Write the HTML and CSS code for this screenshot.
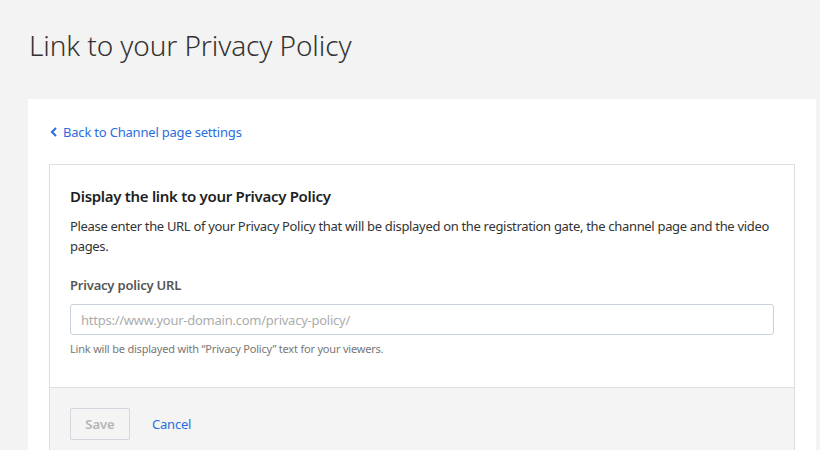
FILE: index.html
```html
<!DOCTYPE html>
<html>
<head>
<meta charset="utf-8">
<link rel="stylesheet" href="styles.css">
</head>
<body>
<div class="page">
  <h1 class="title">Link to your Privacy Policy</h1>
  <div class="panel">
    <a class="back" href="#"><svg class="chev" width="8" height="10" viewBox="0 0 8 10"><path d="M6 1 L2 5 L6 9" fill="none" stroke="currentColor" stroke-width="2"/></svg>Back to Channel page settings</a>
    <div class="card">
      <div class="card-body">
        <h2 class="card-title">Display the link to your Privacy Policy</h2>
        <p class="desc">Please enter the URL of your Privacy Policy that will be displayed on the registration gate, the channel page and the video pages.</p>
        <label class="label" for="url">Privacy policy URL</label>
        <input id="url" class="input" type="text" placeholder="https://www.your-domain.com/privacy-policy/">
        <p class="help">Link will be displayed with “Privacy Policy” text for your viewers.</p>
      </div>
      <div class="card-footer">
        <button class="btn-save" disabled>Save</button>
        <a class="cancel" href="#">Cancel</a>
      </div>
    </div>
  </div>
</div>
</body>
</html>
```

FILE: styles.css
```css
* { box-sizing: border-box; }
html, body { margin: 0; padding: 0; }
body {
  background: #f3f3f3;
  font-family: "Noto Sans", "Open Sans", sans-serif;
  color: #222;
  overflow: hidden;
}
.page { padding: 0 4px 0 28px; }
.title {
  margin: 0;
  padding: 27px 0 0 1px;
  height: 99px;
  font-size: 28px;
  font-weight: 300;
  color: #333;
  line-height: 36px;
  letter-spacing: -0.1px;
}
.panel {
  background: #fff;
  padding: 24px 21px 0 21px;
  height: 360px;
}
.back {
  display: flex;
  align-items: center;
  gap: 5px;
  color: #2a6de0;
  text-decoration: none;
  font-size: 13px;
  line-height: 18px;
  height: 18px;
  margin-left: 1px;
  letter-spacing: -0.2px;
}
.chev { display: block; }
.card {
  margin-top: 23px;
  border: 1px solid #dedede;
  border-bottom: none;
  height: 300px;
  display: flex;
  flex-direction: column;
}
.card-body { padding: 20px 20px 30px 20px; }
.card-title {
  margin: 0;
  font-size: 15px;
  font-weight: 600;
  line-height: 22px;
  color: #1e1e1e;
  letter-spacing: -0.3px;
}
.desc {
  margin: 9px 0 0 0;
  font-size: 13px;
  line-height: 20px;
  color: #333;
  letter-spacing: -0.32px;
}
.label {
  display: block;
  margin-top: 19px;
  font-size: 13px;
  font-weight: 600;
  line-height: 20px;
  color: #555;
  letter-spacing: -0.2px;
}
.input {
  display: block;
  width: 100%;
  margin-top: 9px;
  height: 31px;
  border: 1px solid #c9d2dc;
  border-radius: 3px;
  padding: 0 10px;
  font-family: inherit;
  font-size: 13px;
  color: #333;
  outline: none;
  letter-spacing: -0.25px;
}
.input::placeholder { color: #acacac; }
.help {
  margin: 6px 0 0 0;
  font-size: 11px;
  line-height: 16px;
  color: #777;
  letter-spacing: -0.2px;
}
.card-footer {
  flex: 1;
  background: #f4f4f4;
  border-top: 1px solid #dedede;
  padding: 20px 20px;
  display: flex;
  align-items: flex-start;
  gap: 22px;
}
.btn-save {
  width: 60px;
  height: 32px;
  border: 1px solid #d4d8de;
  background: #f4f4f4;
  color: #b5b5b5;
  font-family: inherit;
  font-size: 13px;
  font-weight: 600;
  border-radius: 1px;
}
.cancel {
  color: #2a6de0;
  text-decoration: none;
  font-size: 13px;
  line-height: 32px;
  letter-spacing: -0.2px;
}
```
